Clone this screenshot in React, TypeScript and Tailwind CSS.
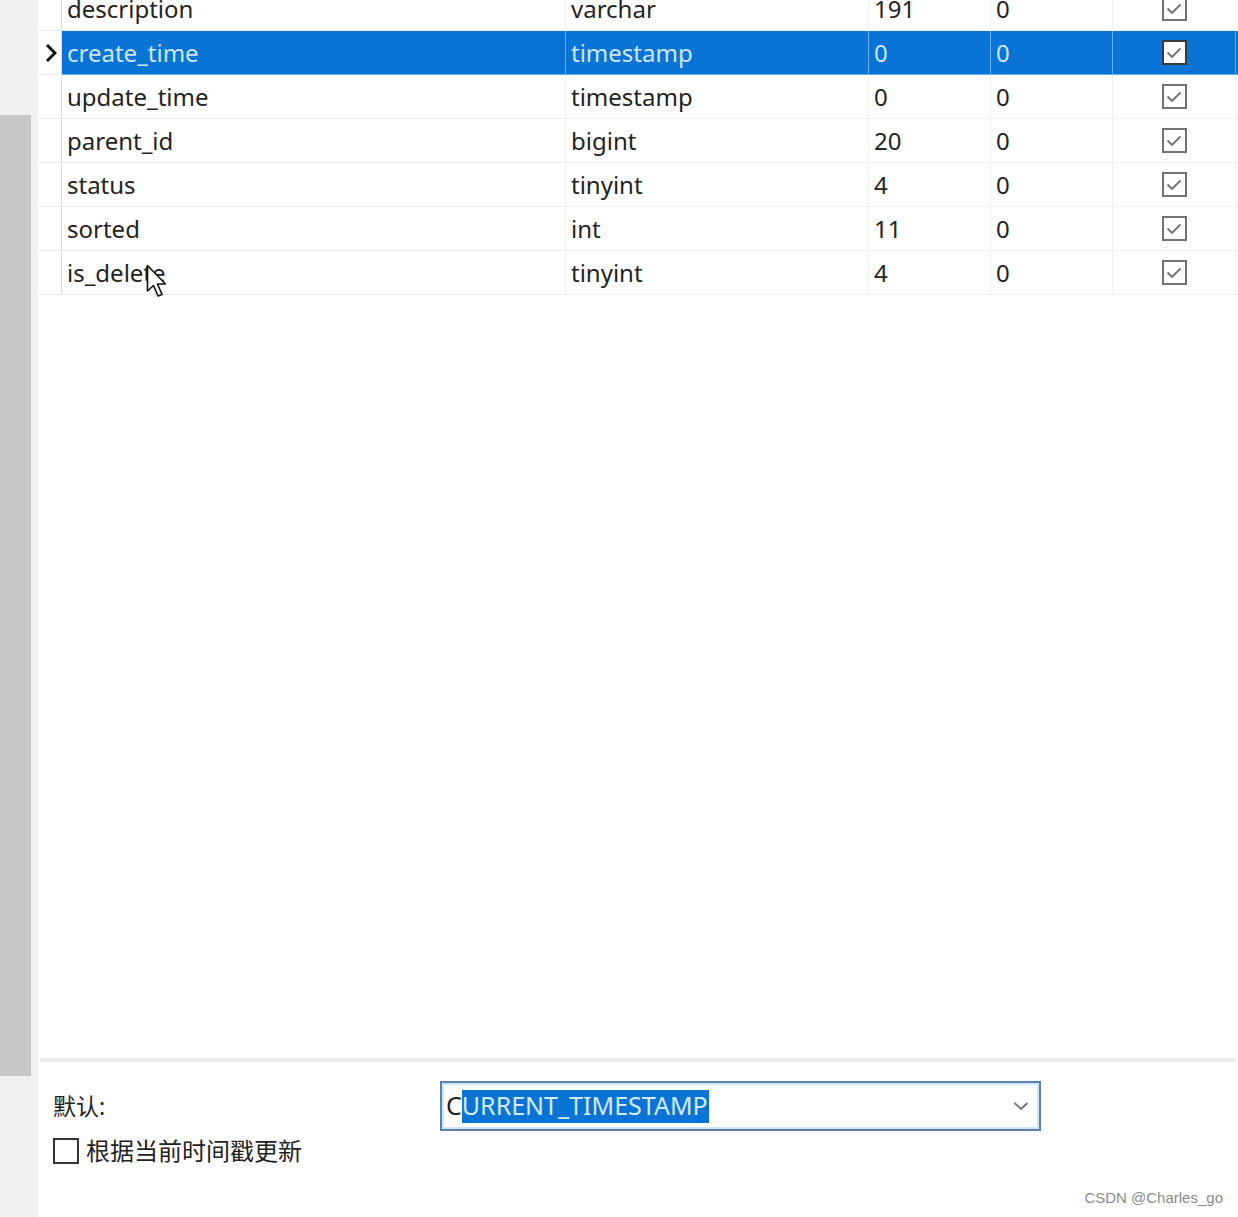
import React from 'react';

interface Field {
  name: string;
  type: string;
  length: string;
  decimals: string;
  notNull: boolean;
}

const fields: Field[] = [
  { name: 'description', type: 'varchar', length: '191', decimals: '0', notNull: true },
  { name: 'create_time', type: 'timestamp', length: '0', decimals: '0', notNull: true },
  { name: 'update_time', type: 'timestamp', length: '0', decimals: '0', notNull: true },
  { name: 'parent_id', type: 'bigint', length: '20', decimals: '0', notNull: true },
  { name: 'status', type: 'tinyint', length: '4', decimals: '0', notNull: true },
  { name: 'sorted', type: 'int', length: '11', decimals: '0', notNull: true },
  { name: 'is_delete', type: 'tinyint', length: '4', decimals: '0', notNull: true },
];

const SELECTED = 1;

function CheckBox({ checked, selected }: { checked: boolean; selected?: boolean }) {
  return (
    <div
      className={
        'w-[25px] h-[25px] border-2 flex items-center justify-center ' +
        (selected ? 'border-[#3a3a3a] bg-white' : 'border-[#727272] bg-white')
      }
    >
      {checked && (
        <svg width="16" height="12" viewBox="0 0 16 12" fill="none">
          <path d="M1.5 5.5 L6 10 L14.5 1.5" stroke="#707070" strokeWidth="1.8" />
        </svg>
      )}
    </div>
  );
}

function Row({ f, selected }: { f: Field; selected: boolean }) {
  const cell = 'h-[44px] flex items-center pl-[5px] border-b';
  const txt = selected ? 'text-[#cfe6ff]' : 'text-[#232323]';
  const bg = selected ? 'bg-[#0a74d6] border-[#66aef0]' : 'bg-white border-[#ececec]';
  const vline = selected ? 'border-l border-[#8ccaff]' : 'border-l border-[#f1f1f1]';
  return (
    <>
      <div className="h-[44px] flex items-center justify-end pr-[4px] border-b border-[#ececec] border-r border-r-[#dcdcdc] bg-white">
        {selected && (
          <svg width="12" height="20" viewBox="0 0 12 20">
            <path d="M2 2 L10 10 L2 18" stroke="#111" strokeWidth="3" fill="none" />
          </svg>
        )}
      </div>
      <div className={`${cell} ${bg} ${txt}`}>{f.name}</div>
      <div className={`${cell} ${bg} ${txt} ${vline}`}>{f.type}</div>
      <div className={`${cell} ${bg} ${txt} ${vline}`}>{f.length}</div>
      <div className={`${cell} ${bg} ${txt} ${vline}`}>{f.decimals}</div>
      <div className={`h-[44px] flex items-center justify-center border-b ${bg} ${vline}`}>
        <CheckBox checked={f.notNull} selected={selected} />
      </div>
      <div className={`h-[44px] border-b ${bg} ${vline}`} />
    </>
  );
}

export default function App() {
  return (
    <div className="w-[1238px] h-[1217px] bg-white flex overflow-hidden relative font-['Noto_Sans','Noto_Sans_CJK_SC',sans-serif]">
      {/* Scrollbar strip */}
      <div className="w-[38px] shrink-0 bg-[#f1f1f1] flex flex-col">
        <div className="h-[115px]" />
        <div className="h-[961px] w-[31px] bg-[#c8c8c8]" />
      </div>

      <div className="flex-1 flex flex-col">
        {/* Grid */}
        <div className="-mt-[13px] grid grid-cols-[24px_503px_303px_122px_122px_123px_1fr] text-[24px] leading-none">
          {fields.map((f, i) => (
            <Row key={f.name} f={f} selected={i === SELECTED} />
          ))}
        </div>

        <div className="flex-1" />

        {/* Bottom properties */}
        <div className="h-[4px] bg-[#ececec] mx-[2px]" />
        <div className="h-[155px] flex flex-col pl-[15px] pt-[19px]">
          <div className="flex items-center">
            <div className="w-[387px] text-[23px] text-[#222]">默认:</div>
            <div className="w-[601px] h-[50px] border-2 border-[#5b82ad] shadow-[inset_0_0_0_2px_#cde6ff] flex items-center pl-[4px] pr-[10px]">
              <div className="flex-1 flex items-center text-[25px] text-[#1e1e1e]">
                <span>C</span>
                <span className="bg-[#0a74d6] text-[#d4eaff] h-[33px] flex items-center pr-[1px]">URRENT_TIMESTAMP</span>
              </div>
              <svg width="16" height="10" viewBox="0 0 16 10">
                <path d="M1.5 2 L8 8 L14.5 2" stroke="#707070" strokeWidth="1.8" fill="none" />
              </svg>
            </div>
          </div>
          <div className="flex items-center mt-[2px]">
            <div className="w-[26px] h-[26px] border-2 border-[#333] bg-white" />
            <span className="ml-[7px] text-[24px] text-[#222]">根据当前时间戳更新</span>
          </div>
          <div className="flex-1" />
          <div className="self-end pr-[15px] pb-[8px] text-[15px] text-[#8a8a8a] font-['Liberation_Sans',sans-serif]">
            CSDN @Charles_go
          </div>
        </div>
      </div>

      {/* Mouse cursor */}
      <svg className="absolute left-[146px] top-[264px]" width="26" height="38" viewBox="0 0 26 38">
        <path
          d="M1.5 1.5 L1.5 27 L7.5 21.5 L12 32 L16 30.5 L11.5 20 L19.5 20 Z"
          fill="#ffffff"
          stroke="#111"
          strokeWidth="1.6"
          strokeLinejoin="round"
        />
      </svg>
    </div>
  );
}
